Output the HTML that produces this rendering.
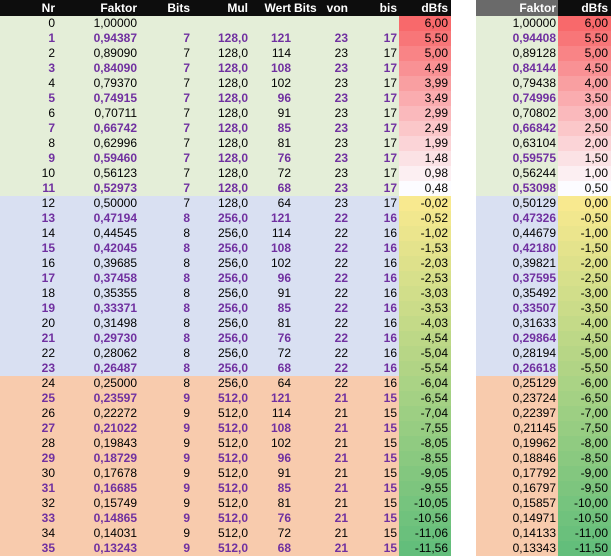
<!DOCTYPE html>
<html><head><meta charset="utf-8"><style>
body{margin:0;width:611px;height:556px;overflow:hidden;background:#fff;font-family:"Liberation Sans",Arial,sans-serif;font-size:12px;color:#000}
.r{display:grid;grid-template-columns:58px 82px 53px 58px 43px 25px 32px 48px 52px 25px 82px 53px;height:15px;line-height:15px}
.r div{text-align:right;padding-right:3px;white-space:nowrap;overflow:hidden}
.r div:nth-child(8),.r div:nth-child(11){padding-right:2px}
.r div:nth-child(10){background:#fff}
.h{height:16px;line-height:16px;background:#0d0d0d;color:#fff;font-weight:bold}
.h div{overflow:visible}
.h div:nth-child(6){padding-right:2px;direction:rtl;text-align:left}
.h div:nth-child(11){background:#6a6a6a}
.g{background:#e4eed8}.b{background:#d9e0f2}.o{background:#f8cbad}
.p div{color:#7030a0;font-weight:bold}
.p div:nth-child(9),.p div:nth-child(12){color:#000;font-weight:normal}
.q div:nth-child(11){color:#000;font-weight:normal}
</style></head><body>
<div class="r h"><div>Nr</div><div>Faktor</div><div>Bits</div><div>Mul</div><div>Wert</div><div>Bits</div><div>von</div><div>bis</div><div>dBfs</div><div></div><div>Faktor</div><div>dBfs</div></div>
<div class="r g"><div>0</div><div>1,00000</div><div></div><div></div><div></div><div></div><div></div><div></div><div style="background:rgb(248,105,107)">6,00</div><div></div><div>1,00000</div><div style="background:rgb(248,105,107)">6,00</div></div>
<div class="r g p"><div>1</div><div>0,94387</div><div>7</div><div>128,0</div><div>121</div><div></div><div>23</div><div>17</div><div style="background:rgb(248,118,120)">5,50</div><div></div><div>0,94408</div><div style="background:rgb(248,118,120)">5,50</div></div>
<div class="r g"><div>2</div><div>0,89090</div><div>7</div><div>128,0</div><div>114</div><div></div><div>23</div><div>17</div><div style="background:rgb(249,132,134)">5,00</div><div></div><div>0,89128</div><div style="background:rgb(249,132,134)">5,00</div></div>
<div class="r g p"><div>3</div><div>0,84090</div><div>7</div><div>128,0</div><div>108</div><div></div><div>23</div><div>17</div><div style="background:rgb(249,145,148)">4,49</div><div></div><div>0,84144</div><div style="background:rgb(249,145,148)">4,50</div></div>
<div class="r g"><div>4</div><div>0,79370</div><div>7</div><div>128,0</div><div>102</div><div></div><div>23</div><div>17</div><div style="background:rgb(249,159,161)">3,99</div><div></div><div>0,79438</div><div style="background:rgb(249,159,161)">4,00</div></div>
<div class="r g p"><div>5</div><div>0,74915</div><div>7</div><div>128,0</div><div>96</div><div></div><div>23</div><div>17</div><div style="background:rgb(250,172,175)">3,49</div><div></div><div>0,74996</div><div style="background:rgb(250,172,175)">3,50</div></div>
<div class="r g"><div>6</div><div>0,70711</div><div>7</div><div>128,0</div><div>91</div><div></div><div>23</div><div>17</div><div style="background:rgb(250,185,188)">2,99</div><div></div><div>0,70802</div><div style="background:rgb(250,185,188)">3,00</div></div>
<div class="r g p"><div>7</div><div>0,66742</div><div>7</div><div>128,0</div><div>85</div><div></div><div>23</div><div>17</div><div style="background:rgb(251,199,201)">2,49</div><div></div><div>0,66842</div><div style="background:rgb(251,199,201)">2,50</div></div>
<div class="r g"><div>8</div><div>0,62996</div><div>7</div><div>128,0</div><div>81</div><div></div><div>23</div><div>17</div><div style="background:rgb(251,212,215)">1,99</div><div></div><div>0,63104</div><div style="background:rgb(251,212,215)">2,00</div></div>
<div class="r g p"><div>9</div><div>0,59460</div><div>7</div><div>128,0</div><div>76</div><div></div><div>23</div><div>17</div><div style="background:rgb(251,226,229)">1,48</div><div></div><div>0,59575</div><div style="background:rgb(251,226,229)">1,50</div></div>
<div class="r g"><div>10</div><div>0,56123</div><div>7</div><div>128,0</div><div>72</div><div></div><div>23</div><div>17</div><div style="background:rgb(252,239,242)">0,98</div><div></div><div>0,56244</div><div style="background:rgb(252,239,242)">1,00</div></div>
<div class="r g p"><div>11</div><div>0,52973</div><div>7</div><div>128,0</div><div>68</div><div></div><div>23</div><div>17</div><div style="background:rgb(252,252,255)">0,48</div><div></div><div>0,53098</div><div style="background:rgb(252,252,255)">0,50</div></div>
<div class="r b"><div>12</div><div>0,50000</div><div>7</div><div>128,0</div><div>64</div><div></div><div>23</div><div>17</div><div style="background:rgb(248,233,143)">-0,02</div><div></div><div>0,50129</div><div style="background:rgb(248,233,143)">0,00</div></div>
<div class="r b p"><div>13</div><div>0,47194</div><div>8</div><div>256,0</div><div>121</div><div></div><div>22</div><div>16</div><div style="background:rgb(241,231,142)">-0,52</div><div></div><div>0,47326</div><div style="background:rgb(241,231,142)">-0,50</div></div>
<div class="r b"><div>14</div><div>0,44545</div><div>8</div><div>256,0</div><div>114</div><div></div><div>22</div><div>16</div><div style="background:rgb(235,229,141)">-1,02</div><div></div><div>0,44679</div><div style="background:rgb(235,229,141)">-1,00</div></div>
<div class="r b p"><div>15</div><div>0,42045</div><div>8</div><div>256,0</div><div>108</div><div></div><div>22</div><div>16</div><div style="background:rgb(228,227,140)">-1,53</div><div></div><div>0,42180</div><div style="background:rgb(228,227,140)">-1,50</div></div>
<div class="r b"><div>16</div><div>0,39685</div><div>8</div><div>256,0</div><div>102</div><div></div><div>22</div><div>16</div><div style="background:rgb(222,225,139)">-2,03</div><div></div><div>0,39821</div><div style="background:rgb(222,225,139)">-2,00</div></div>
<div class="r b p"><div>17</div><div>0,37458</div><div>8</div><div>256,0</div><div>96</div><div></div><div>22</div><div>16</div><div style="background:rgb(215,224,139)">-2,53</div><div></div><div>0,37595</div><div style="background:rgb(215,224,139)">-2,50</div></div>
<div class="r b"><div>18</div><div>0,35355</div><div>8</div><div>256,0</div><div>91</div><div></div><div>22</div><div>16</div><div style="background:rgb(209,222,138)">-3,03</div><div></div><div>0,35492</div><div style="background:rgb(209,222,138)">-3,00</div></div>
<div class="r b p"><div>19</div><div>0,33371</div><div>8</div><div>256,0</div><div>85</div><div></div><div>22</div><div>16</div><div style="background:rgb(203,220,137)">-3,53</div><div></div><div>0,33507</div><div style="background:rgb(203,220,137)">-3,50</div></div>
<div class="r b"><div>20</div><div>0,31498</div><div>8</div><div>256,0</div><div>81</div><div></div><div>22</div><div>16</div><div style="background:rgb(196,218,136)">-4,03</div><div></div><div>0,31633</div><div style="background:rgb(196,218,136)">-4,00</div></div>
<div class="r b p"><div>21</div><div>0,29730</div><div>8</div><div>256,0</div><div>76</div><div></div><div>22</div><div>16</div><div style="background:rgb(189,216,135)">-4,54</div><div></div><div>0,29864</div><div style="background:rgb(189,216,135)">-4,50</div></div>
<div class="r b"><div>22</div><div>0,28062</div><div>8</div><div>256,0</div><div>72</div><div></div><div>22</div><div>16</div><div style="background:rgb(183,214,134)">-5,04</div><div></div><div>0,28194</div><div style="background:rgb(183,214,134)">-5,00</div></div>
<div class="r b p"><div>23</div><div>0,26487</div><div>8</div><div>256,0</div><div>68</div><div></div><div>22</div><div>16</div><div style="background:rgb(177,212,133)">-5,54</div><div></div><div>0,26618</div><div style="background:rgb(177,212,133)">-5,50</div></div>
<div class="r o"><div>24</div><div>0,25000</div><div>8</div><div>256,0</div><div>64</div><div></div><div>22</div><div>16</div><div style="background:rgb(170,211,133)">-6,04</div><div></div><div>0,25129</div><div style="background:rgb(170,211,133)">-6,00</div></div>
<div class="r o p q"><div>25</div><div>0,23597</div><div>9</div><div>512,0</div><div>121</div><div></div><div>21</div><div>15</div><div style="background:rgb(164,209,132)">-6,54</div><div></div><div>0,23724</div><div style="background:rgb(164,209,132)">-6,50</div></div>
<div class="r o"><div>26</div><div>0,22272</div><div>9</div><div>512,0</div><div>114</div><div></div><div>21</div><div>15</div><div style="background:rgb(157,207,131)">-7,04</div><div></div><div>0,22397</div><div style="background:rgb(157,207,131)">-7,00</div></div>
<div class="r o p q"><div>27</div><div>0,21022</div><div>9</div><div>512,0</div><div>108</div><div></div><div>21</div><div>15</div><div style="background:rgb(151,205,130)">-7,55</div><div></div><div>0,21145</div><div style="background:rgb(151,205,130)">-7,50</div></div>
<div class="r o"><div>28</div><div>0,19843</div><div>9</div><div>512,0</div><div>102</div><div></div><div>21</div><div>15</div><div style="background:rgb(144,203,129)">-8,05</div><div></div><div>0,19962</div><div style="background:rgb(144,203,129)">-8,00</div></div>
<div class="r o p q"><div>29</div><div>0,18729</div><div>9</div><div>512,0</div><div>96</div><div></div><div>21</div><div>15</div><div style="background:rgb(138,201,128)">-8,55</div><div></div><div>0,18846</div><div style="background:rgb(138,201,128)">-8,50</div></div>
<div class="r o"><div>30</div><div>0,17678</div><div>9</div><div>512,0</div><div>91</div><div></div><div>21</div><div>15</div><div style="background:rgb(131,199,127)">-9,05</div><div></div><div>0,17792</div><div style="background:rgb(131,199,127)">-9,00</div></div>
<div class="r o p q"><div>31</div><div>0,16685</div><div>9</div><div>512,0</div><div>85</div><div></div><div>21</div><div>15</div><div style="background:rgb(125,197,126)">-9,55</div><div></div><div>0,16797</div><div style="background:rgb(125,197,126)">-9,50</div></div>
<div class="r o"><div>32</div><div>0,15749</div><div>9</div><div>512,0</div><div>81</div><div></div><div>21</div><div>15</div><div style="background:rgb(118,196,126)">-10,05</div><div></div><div>0,15857</div><div style="background:rgb(118,196,126)">-10,00</div></div>
<div class="r o p q"><div>33</div><div>0,14865</div><div>9</div><div>512,0</div><div>76</div><div></div><div>21</div><div>15</div><div style="background:rgb(112,194,125)">-10,56</div><div></div><div>0,14971</div><div style="background:rgb(112,194,125)">-10,50</div></div>
<div class="r o"><div>34</div><div>0,14031</div><div>9</div><div>512,0</div><div>72</div><div></div><div>21</div><div>15</div><div style="background:rgb(106,192,124)">-11,06</div><div></div><div>0,14133</div><div style="background:rgb(106,192,124)">-11,00</div></div>
<div class="r o p q"><div>35</div><div>0,13243</div><div>9</div><div>512,0</div><div>68</div><div></div><div>21</div><div>15</div><div style="background:rgb(99,190,123)">-11,56</div><div></div><div>0,13343</div><div style="background:rgb(99,190,123)">-11,50</div></div>
</body></html>
